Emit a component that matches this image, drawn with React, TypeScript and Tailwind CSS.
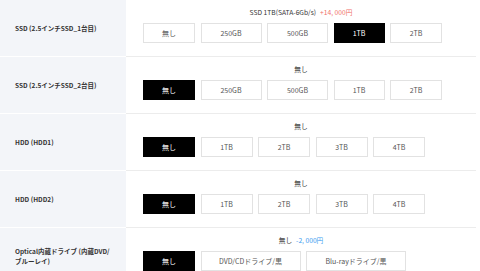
import React from "react";

type Option = { label: string; w: string };

type Row = {
  label: React.ReactNode;
  title: string;
  price?: { text: string; tone: "up" | "down" };
  options: Option[];
  selected: number;
};

const ROWS: Row[] = [
  {
    label: "SSD (2.5インチSSD_1台目)",
    title: "SSD 1TB(SATA-6Gb/s)",
    price: { text: "+14, 000円", tone: "up" },
    options: [
      { label: "無し", w: "w-[52px]" },
      { label: "250GB", w: "w-[61px]" },
      { label: "500GB", w: "w-[61px]" },
      { label: "1TB", w: "w-[51px]" },
      { label: "2TB", w: "w-[52px]" },
    ],
    selected: 3,
  },
  {
    label: "SSD (2.5インチSSD_2台目)",
    title: "無し",
    options: [
      { label: "無し", w: "w-[52px]" },
      { label: "250GB", w: "w-[61px]" },
      { label: "500GB", w: "w-[61px]" },
      { label: "1TB", w: "w-[51px]" },
      { label: "2TB", w: "w-[52px]" },
    ],
    selected: 0,
  },
  {
    label: "HDD (HDD1)",
    title: "無し",
    options: [
      { label: "無し", w: "w-[52px]" },
      { label: "1TB", w: "w-[52px]" },
      { label: "2TB", w: "w-[52px]" },
      { label: "3TB", w: "w-[52px]" },
      { label: "4TB", w: "w-[52px]" },
    ],
    selected: 0,
  },
  {
    label: "HDD (HDD2)",
    title: "無し",
    options: [
      { label: "無し", w: "w-[52px]" },
      { label: "1TB", w: "w-[52px]" },
      { label: "2TB", w: "w-[52px]" },
      { label: "3TB", w: "w-[52px]" },
      { label: "4TB", w: "w-[52px]" },
    ],
    selected: 0,
  },
  {
    label: (
      <>
        Optical内蔵ドライブ (内蔵DVD/
        <br />
        ブルーレイ)
      </>
    ),
    title: "無し",
    price: { text: "-2, 000円", tone: "down" },
    options: [
      { label: "無し", w: "w-[52px]" },
      { label: "DVD/CDドライブ/黒", w: "w-[100px]" },
      { label: "Blu-rayドライブ/黒", w: "w-[100px]" },
    ],
    selected: 0,
  },
];

export default function App() {
  return (
    <div
      className="w-[480px] h-[271px] overflow-hidden bg-white"
      style={{ fontFamily: '"Noto Sans CJK JP", "Noto Sans", sans-serif' }}
    >
      {ROWS.map((row, i) => (
        <div key={i} className="flex">
          {/* label cell */}
          <div className="w-[126px] shrink-0 bg-[#f3f5f9] border-b border-white flex items-center pl-[15px] pr-2">
            <span className="text-[6.5px] leading-[10px] font-bold text-[#333]">{row.label}</span>
          </div>

          {/* options cell */}
          <div className="w-[350px] border-b border-[#ececec] pt-[7px] pb-[13px] pl-[17px]">
            <div className="text-center pr-[17px] text-[6.7px] leading-[10px] text-[#333]">
              {row.title}
              {row.price && (
                <span className={`ml-[4px] ${row.price.tone === "up" ? "text-[#f0706a]" : "text-[#3d9cf0]"}`}>
                  {row.price.text}
                </span>
              )}
            </div>
            <div className="flex gap-[5.5px] mt-[6px]">
              {row.options.map((opt, j) => (
                <button
                  key={opt.label}
                  className={`${opt.w} h-5 flex items-center justify-center text-[7px] border ${
                    j === row.selected
                      ? "bg-black border-black text-white"
                      : "bg-white border-[#e2e2e2] text-[#555]"
                  }`}
                >
                  {opt.label}
                </button>
              ))}
            </div>
          </div>
        </div>
      ))}
    </div>
  );
}
